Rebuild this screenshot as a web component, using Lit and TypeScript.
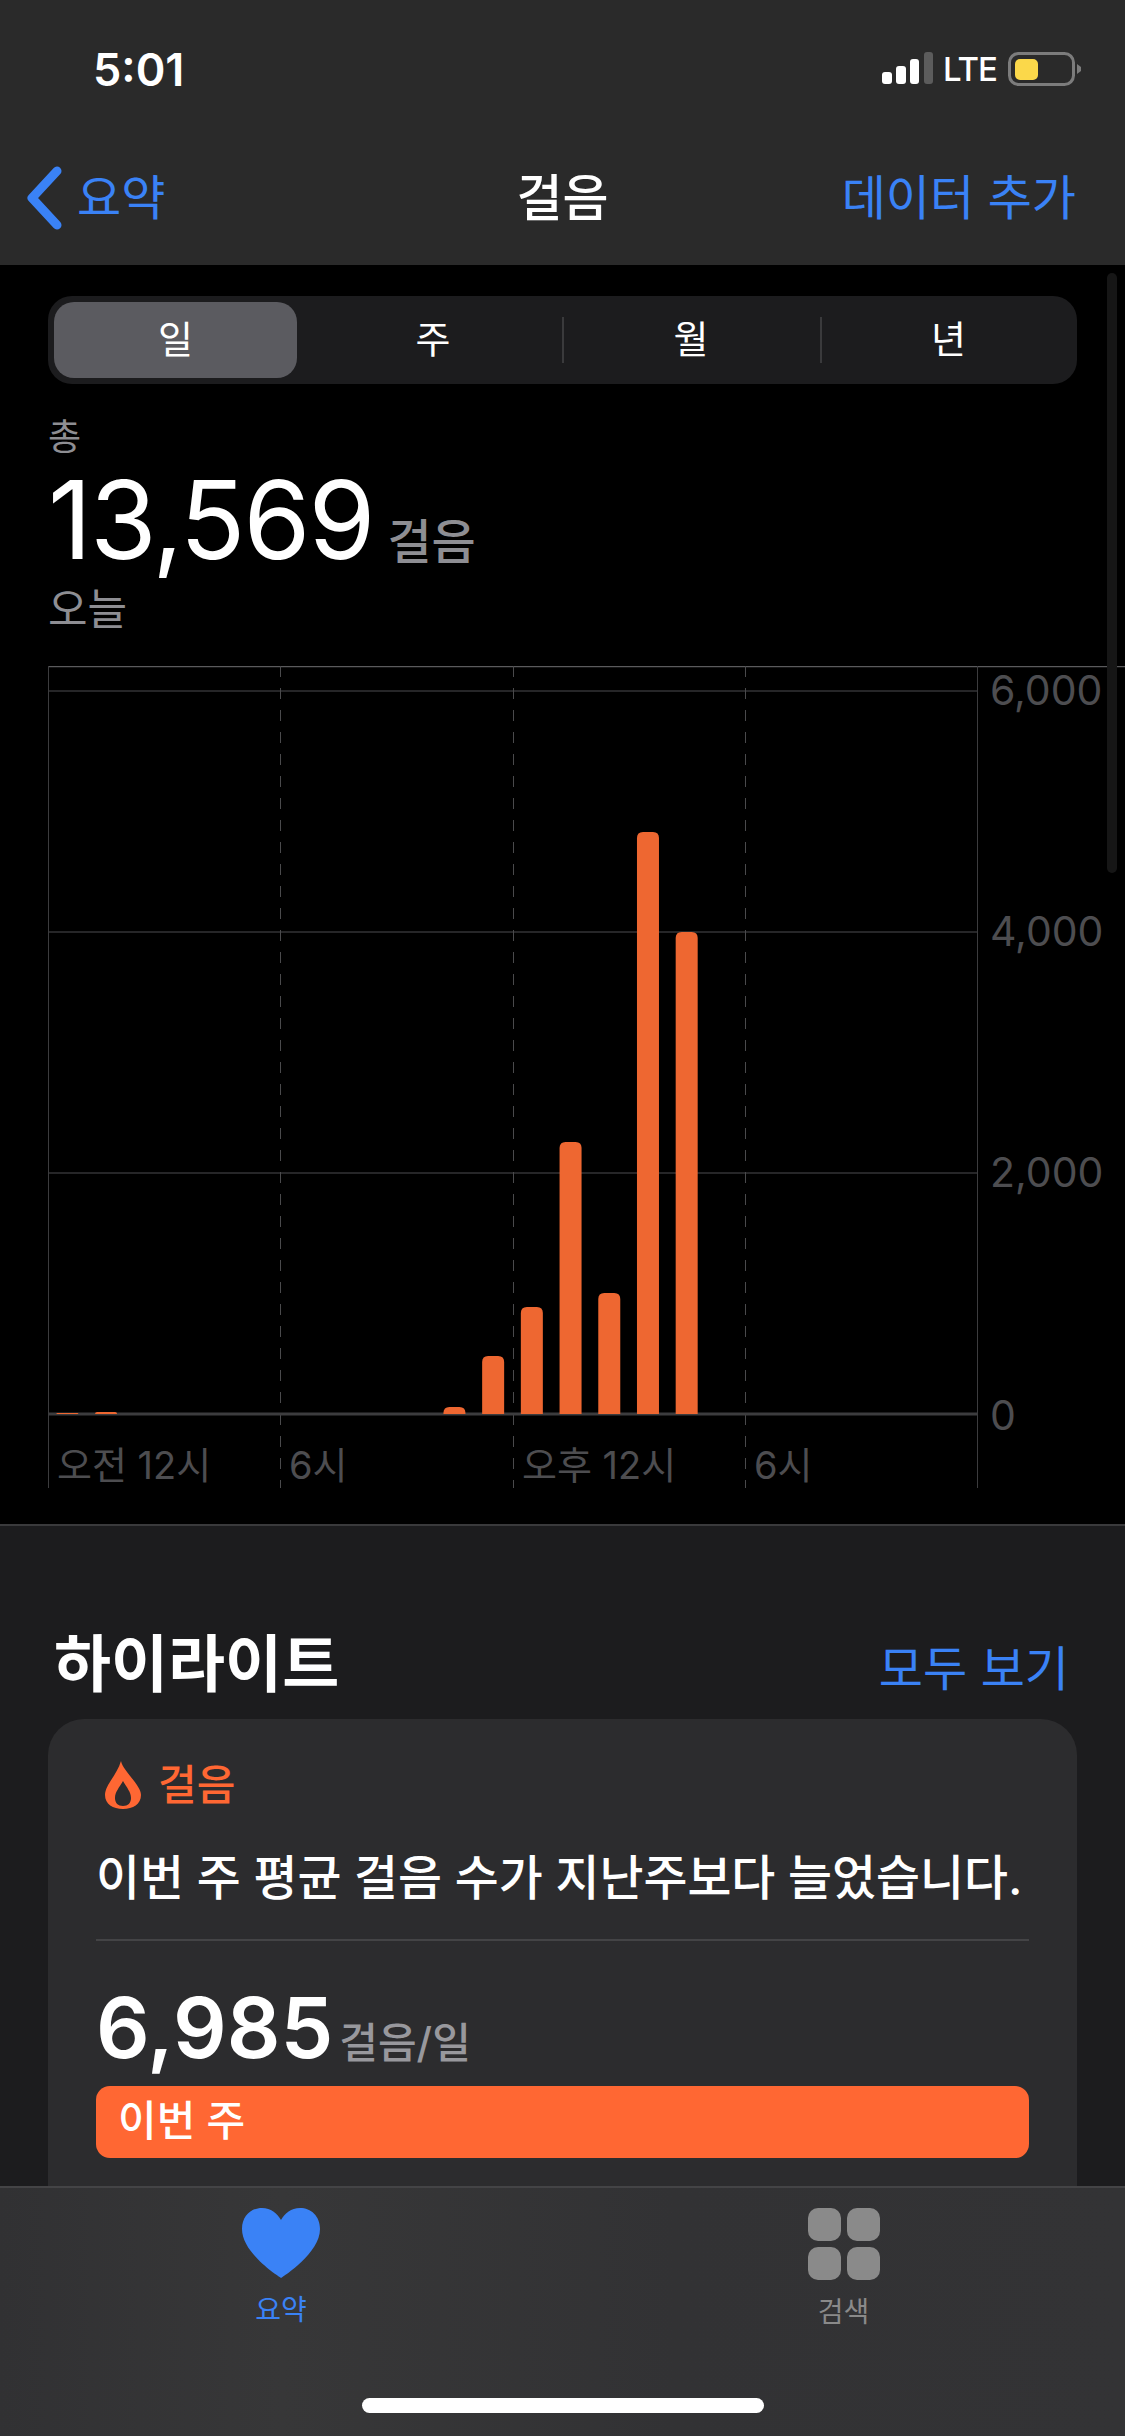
import { LitElement, html, css, svg } from "lit";
import { customElement } from "lit/decorators.js";

const BASE = 748; // y of the zero line inside the chart
const bars: [number, number][] = [
  [0, 1], [1, 2], [10, 7], [11, 58], [12, 107], [13, 272], [14, 121], [15, 582], [16, 482],
];
const HOUR = 929 / 24;

@customElement("app-root")
export class AppRoot extends LitElement {
  static styles = css`
    :host {
      display: flex;
      flex-direction: column;
      width: 1125px;
      height: 2436px;
      overflow: hidden;
      background: #000;
      color: #fff;
      font-family: "Inter", "Noto Sans CJK KR", "Liberation Sans", sans-serif;
      position: relative;
    }
    .top { background: #2a2a2a; height: 265px; flex: none; display: flex; flex-direction: column; }
    .status { height: 138px; display: flex; justify-content: space-between; align-items: center; padding: 0 43px 0 93px; }
    .time { font-size: 45px; font-weight: 600; }
    .indicators { display: flex; align-items: center; gap: 12px; }
    .lte { font-size: 33px; font-weight: 500; letter-spacing: -1px; margin: 0 -1px 0 -2px; }
    .nav { display: grid; grid-template-columns: 1fr auto 1fr; align-items: center; height: 112px; }
    .nav-left { display: flex; align-items: center; gap: 14px; color: #3a82f6; font-size: 48px; padding-left: 26px; }
    .nav-left svg { margin-top: 8px; }
    .nav-title { font-size: 50px; font-weight: 500; }
    .nav-right { justify-self: end; color: #3a82f6; font-size: 48px; padding-right: 49px; }
    .scroll { flex: 1; min-height: 0; overflow: hidden; position: relative; }
    .thumb { position: absolute; left: 1107px; top: 8px; width: 10px; height: 600px; border-radius: 5px; background: #161616; }
    .summary { background: #000; height: 1261px; padding: 31px 0 0 48px; box-sizing: border-box; border-bottom: 2px solid #3a3a3c; }
    .seg { width: 1029px; height: 88px; box-sizing: border-box; background: #1c1c1e; border-radius: 24px; display: grid; grid-template-columns: 250px 258px 258px 257px; padding: 6px 0 6px 6px; align-items: center; }
    .seg div { text-align: center; font-size: 38px; height: 76px; line-height: 74px; position: relative; }
    .seg .on { background: #5b5b60; border-radius: 20px; width: 243px; }
    .seg .sep::before { content: ""; position: absolute; left: 0; top: 15px; height: 46px; width: 2px; background: #3a3a3c; }
    .lbl { color: #8e8e93; font-size: 36px; line-height: 40px; margin-top: 33px; }
    .total { display: flex; align-items: baseline; gap: 14px; height: 106px; line-height: 106px; margin-top: 10px; }
    .total b { font-size: 108px; font-weight: 400; letter-spacing: -2px; }
    .total span { color: #8e8e93; font-size: 48px; font-weight: 500; }
    .today { color: #8e8e93; font-size: 43px; line-height: 50px; margin-top: 11px; }
    .chart { display: block; margin-top: 32px; }
    .chart text { font-family: "Inter", "Noto Sans CJK KR", sans-serif; fill: #4d4d50; }
    .below { background: #1c1c1e; padding: 0 48px; height: 800px; }
    .hl-head { display: flex; justify-content: space-between; align-items: center; padding: 89px 8px 5px 6px; height: 100px; }
    .hl-head h2 { margin: 0; font-size: 62px; font-weight: 700; line-height: 70px; }
    .hl-head span { color: #3a82f6; font-size: 48px; }
    .card { margin-top: -1px; background: #2c2c2e; border-radius: 36px 36px 0 0; padding: 42px 48px; height: 600px; box-sizing: border-box; }
    .card-h { display: flex; align-items: center; gap: 17px; color: #ff6733; font-size: 42px; font-weight: 500; height: 48px; margin-left: 9px; }
    .card-h span { margin-bottom: 7px; }
    .sentence { font-size: 47.8px; font-weight: 500; line-height: 60px; margin-top: 39px; white-space: nowrap; }
    .rule { height: 2px; background: #444446; margin-top: 31px; }
    .avg { display: flex; align-items: baseline; gap: 6px; margin-top: 42px; height: 90px; line-height: 90px; }
    .avg b { font-size: 84px; font-weight: 600; }
    .avg span { color: #98989d; font-size: 42px; font-weight: 500; }
    .bar { height: 72px; border-radius: 14px; background: #ff6733; font-size: 42px; font-weight: 500; line-height: 70px; padding-left: 22px; margin-top: 13px; }
    .tabs { flex: none; height: 250px; box-sizing: border-box; border-top: 2px solid #444446; background: linear-gradient(90deg, #313133, #373738 25%, #323234 60%, #333335); display: grid; grid-template-columns: 562px 563px; position: relative; }
    .tab { display: flex; flex-direction: column; align-items: center; padding-top: 20px; font-size: 28px; color: #8a8a8a; gap: 17px; line-height: 30px; }
    .tab.active { color: #3a82f6; }
    .home { position: absolute; left: 362px; top: 210px; width: 402px; height: 15px; border-radius: 8px; background: #fff; }
  `;

  private chart() {
    const ys = [25, 266, 507];
    const dashes = [232, 465, 697];
    return html`<svg class="chart" width="1077" height="822" viewBox="0 0 1077 822">
      <line x1="0" y1="0.5" x2="1077" y2="0.5" stroke="#5a5a5c" stroke-width="1.5"></line>
      ${ys.map((y) => svg`<line x1="0" y1=${y} x2="929" y2=${y} stroke="#262628" stroke-width="2"></line>`)}
      <line x1="0.5" y1="0" x2="0.5" y2="822" stroke="#3c3c3e"></line>
      <line x1="929.5" y1="0" x2="929.5" y2="822" stroke="#3c3c3e"></line>
      ${dashes.map((x) => svg`<line x1=${x + 0.5} y1="0" x2=${x + 0.5} y2="822" stroke="#4a4a4c" stroke-dasharray="11 11"></line>`)}
      <line x1="0" y1=${BASE} x2="929" y2=${BASE} stroke="#3c3c3e" stroke-width="3"></line>
      ${bars.map(([h, v]) => {
        const x = (h + 0.5) * HOUR - 11;
        const r = Math.min(v, 6);
        return svg`<path fill="#ee6731" d="M${x} ${BASE}V${BASE - v + r}Q${x} ${BASE - v} ${x + r} ${BASE - v}H${x + 22 - r}Q${x + 22} ${BASE - v} ${x + 22} ${BASE - v + r}V${BASE}Z"></path>`;
      })}
      ${[["6,000", 39], ["4,000", 280], ["2,000", 521]].map(([t, y]) => svg`<text x="942" y=${y} font-size="41">${t}</text>`)}
      <text x="942" y="764" font-size="41">0</text>
      <text x="9" y="813" font-size="38">오전 12시</text>
      <text x="241" y="813" font-size="38">6시</text>
      <text x="474" y="813" font-size="38">오후 12시</text>
      <text x="706" y="813" font-size="38">6시</text>
    </svg>`;
  }

  render() {
    return html`
      <div class="top">
        <div class="status">
          <div class="time">5:01</div>
          <div class="indicators">
            <svg width="51" height="34" viewBox="0 0 51 34">
              <rect x="0" y="20" width="10" height="12" rx="3" fill="#fff"></rect>
              <rect x="14" y="14" width="10" height="18" rx="3" fill="#fff"></rect>
              <rect x="28" y="7" width="9" height="25" rx="3" fill="#fff"></rect>
              <rect x="42" y="0" width="9" height="32" rx="3" fill="#5c5c5c"></rect>
            </svg>
            <span class="lte">LTE</span>
            <svg width="74" height="34" viewBox="0 0 74 34">
              <rect x="1.5" y="1.5" width="64" height="31" rx="9" fill="none" stroke="#7c7c7c" stroke-width="3"></rect>
              <rect x="7" y="7" width="23" height="21" rx="5" fill="#fbd84a"></rect>
              <path d="M69 12l4 3v4l-4 3z" fill="#7c7c7c"></path>
            </svg>
          </div>
        </div>
        <div class="nav">
          <div class="nav-left">
            <svg width="37" height="64" viewBox="0 0 37 64"><path d="M31 5L6 32l25 27" fill="none" stroke="#3a82f6" stroke-width="9" stroke-linecap="round" stroke-linejoin="round"></path></svg>
            <span>요약</span>
          </div>
          <div class="nav-title">걸음</div>
          <div class="nav-right">데이터 추가</div>
        </div>
      </div>
      <div class="scroll">
        <div class="summary">
          <div class="seg">
            <div class="on">일</div><div>주</div><div class="sep">월</div><div class="sep">년</div>
          </div>
          <div class="lbl">총</div>
          <div class="total"><b>13,569</b><span>걸음</span></div>
          <div class="today">오늘</div>
          ${this.chart()}
        </div>
        <div class="thumb"></div>
        <div class="below">
          <div class="hl-head"><h2>하이라이트</h2><span>모두 보기</span></div>
          <div class="card">
            <div class="card-h">
              <svg width="36" height="48" viewBox="0 0 36 48"><path fill-rule="evenodd" fill="#ff6733" d="M16 0C18 10 36 24 36 34 36 43 28 48 18 48 8 48 0 43 0 34 0 24 12 14 16 0ZM18 20C14 27 10 31 10 37 10 42 13 45 18 45 23 45 26 42 26 37 26 31 22 27 18 20Z"></path></svg>
              <span>걸음</span>
            </div>
            <div class="sentence">이번 주 평균 걸음 수가 지난주보다 늘었습니다.</div>
            <div class="rule"></div>
            <div class="avg"><b>6,985</b><span>걸음/일</span></div>
            <div class="bar">이번 주</div>
          </div>
        </div>
      </div>
      <div class="tabs">
        <div class="tab active">
          <svg width="78" height="70" viewBox="0 0 78 70"><path fill="#3a82f6" d="M39 70C36 68 0 45 0 21 0 8 9 0 20 0c9 0 15 5 19 12C43 5 49 0 58 0c11 0 20 8 20 21 0 24-36 47-39 49z"></path></svg>
          <span>요약</span>
        </div>
        <div class="tab">
          <svg width="72" height="72" viewBox="0 0 72 72" fill="#8a8a8a">
            <rect x="0" y="0" width="33" height="33" rx="10"></rect><rect x="39" y="0" width="33" height="33" rx="10"></rect>
            <rect x="0" y="39" width="33" height="33" rx="10"></rect><rect x="39" y="39" width="33" height="33" rx="10"></rect>
          </svg>
          <span>검색</span>
        </div>
        <div class="home"></div>
      </div>
    `;
  }
}
